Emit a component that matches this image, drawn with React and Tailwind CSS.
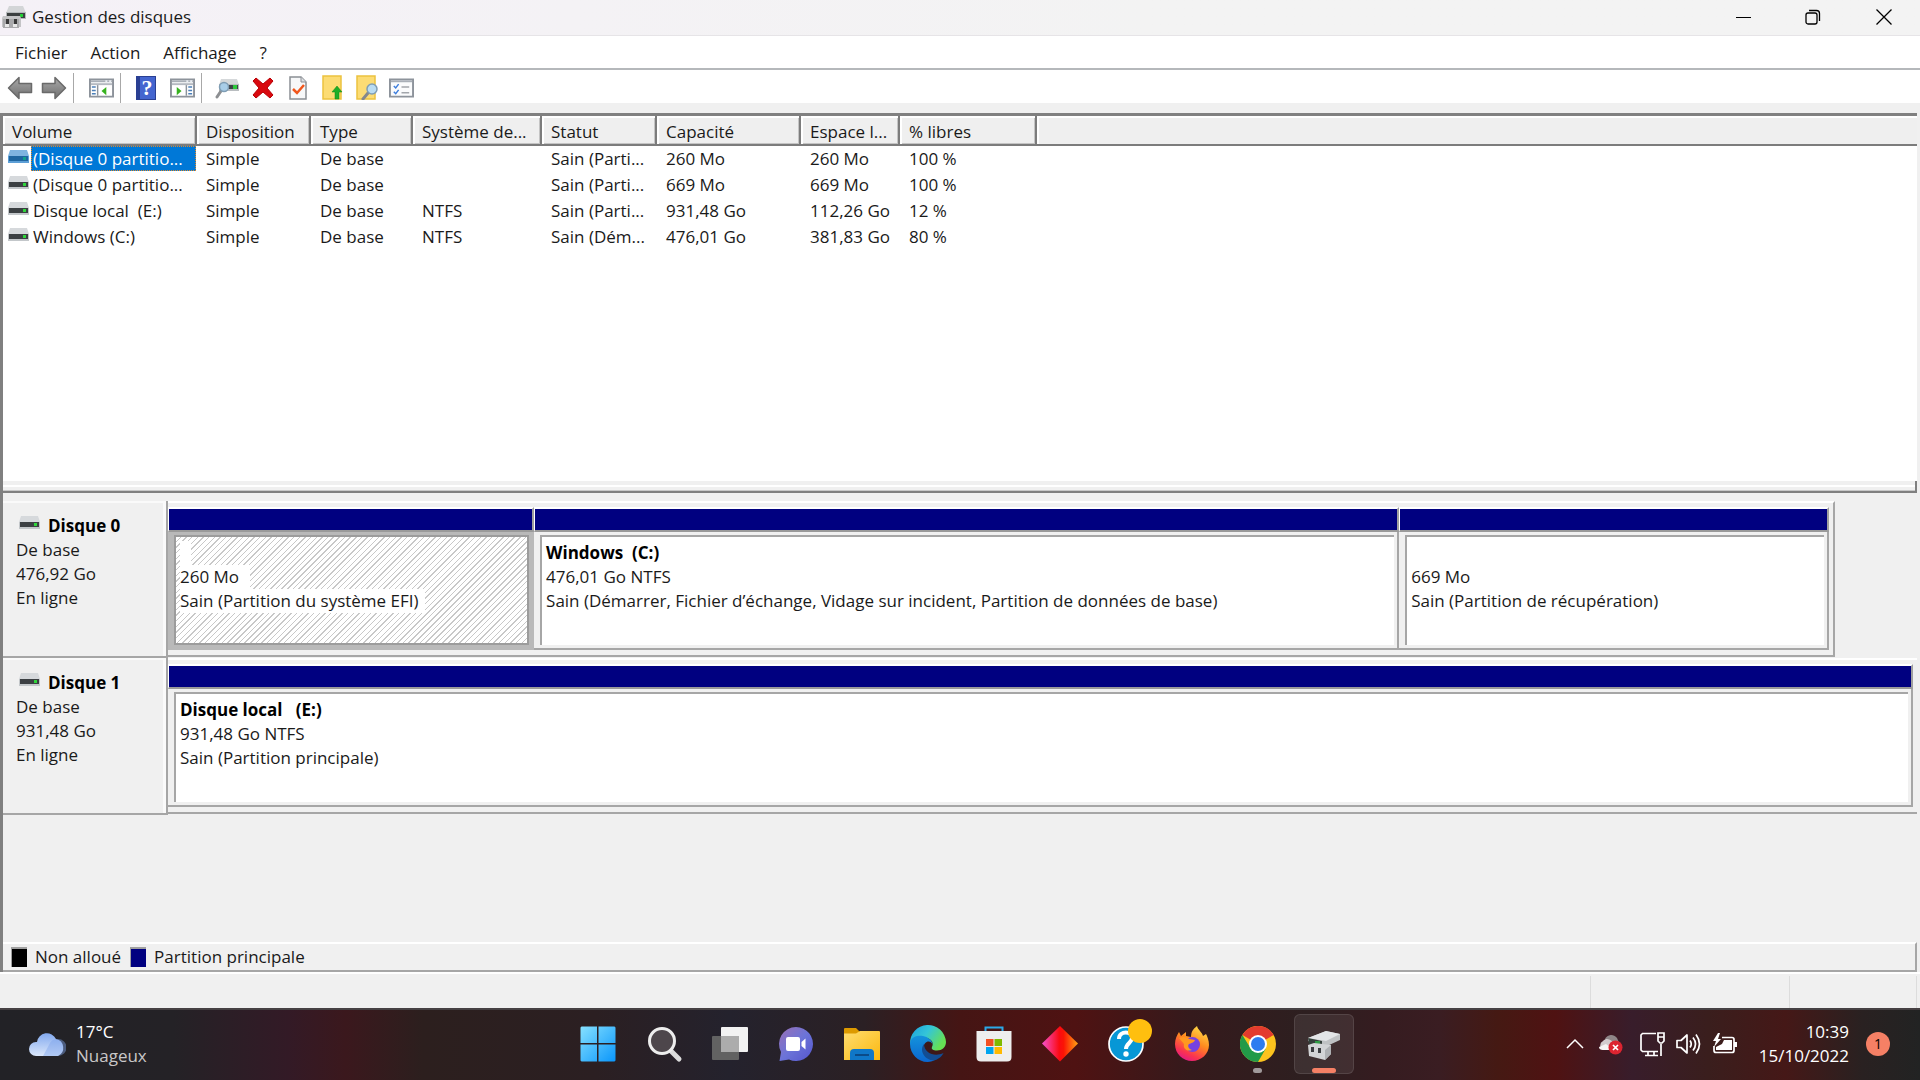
import { useState } from "react";

const volumes = [
  { name: "(Disque 0 partitio...", fs: "", status: "Sain (Parti...", size: "260 Mo", free: "260 Mo", pct: "100 %" },
  { name: "(Disque 0 partitio...", fs: "", status: "Sain (Parti...", size: "669 Mo", free: "669 Mo", pct: "100 %" },
  { name: "Disque local  (E:)", fs: "NTFS", status: "Sain (Parti...", size: "931,48 Go", free: "112,26 Go", pct: "12 %" },
  { name: "Windows (C:)", fs: "NTFS", status: "Sain (Dém...", size: "476,01 Go", free: "381,83 Go", pct: "80 %" },
];

const columns = [
  { label: "Volume", width: "w-[193px]" },
  { label: "Disposition", width: "w-[114px]" },
  { label: "Type", width: "w-[102px]" },
  { label: "Système de...", width: "w-[129px]" },
  { label: "Statut", width: "w-[115px]" },
  { label: "Capacité", width: "w-[144px]" },
  { label: "Espace l...", width: "w-[99px]" },
  { label: "% libres", width: "w-[137px]" },
];

const disks = [
  {
    name: "Disque 0",
    size: "476,92 Go",
    fill: "grow-[1667] border-r-2",
    rest: "grow-[82]",
    partitions: [
      { title: "", size: "260 Mo", status: "Sain (Partition du système EFI)", grow: "grow-[366]", selected: true },
      {
        title: "Windows  (C:)",
        size: "476,01 Go NTFS",
        status: "Sain (Démarrer, Fichier d’échange, Vidage sur incident, Partition de données de base)",
        grow: "grow-[865]",
      },
      { title: "", size: "669 Mo", status: "Sain (Partition de récupération)", grow: "grow-[430]" },
    ],
  },
  {
    name: "Disque 1",
    size: "931,48 Go",
    fill: "grow",
    rest: "",
    partitions: [
      { title: "Disque local   (E:)", size: "931,48 Go NTFS", status: "Sain (Partition principale)", grow: "grow" },
    ],
  },
];

function DriveIcon({ selected }) {
  return (
    <svg width="21" height="13" viewBox="0 0 21 13" className="shrink-0" aria-hidden="true">
      <path d="M2 0h17l2 6H0z" fill={selected ? "#7fb4e0" : "#d6d9dc"} />
      <path d="M0 6h21v7H0z" fill={selected ? "#5d9fd6" : "#c3c7ca"} />
      <path d="M1 6h19v5H1z" fill={selected ? "#1f66a0" : "#3c4043"} />
      <path d="M15 7h3v3h-3z" fill={selected ? "#12a08a" : "#2fd63a"} />
    </svg>
  );
}

function AppIcon() {
  return (
    <svg width="24" height="24" viewBox="0 0 24 24" aria-hidden="true">
      <path d="M7 1h14l3 7H4z" fill="#d3d5d7" />
      <path d="M4 7h20v7H4z" fill="#b5b8ba" />
      <path d="M5 8h18v5H5z" fill="#3b3f40" />
      <path d="M18 9h3v3h-3z" fill="#22cf35" />
      <path d="M0 13l1-2h17l1 2v9H0z" fill="#c4c4c6" />
      <path d="M1 14h16v9H1z" fill="#a9a9ab" />
      <path d="M4 14h3v5H4zM12 14h3v5h-3z" fill="#3a3a3a" />
      <path d="M3 19h4v3H3zM11 19h4v3h-4z" fill="#e8e8e8" />
    </svg>
  );
}

function ArrowIcon({ flip }) {
  const id = flip ? "arrow-right" : "arrow-left";
  return (
    <svg width="26" height="24" viewBox="0 0 26 24" className={flip ? "rotate-180" : ""} aria-hidden="true">
      <defs>
        <linearGradient id={id} x1="0" y1="0" x2="0" y2="1">
          <stop offset="0" stopColor={flip ? "#6f6f6f" : "#a9a9a9"} />
          <stop offset="1" stopColor={flip ? "#a9a9a9" : "#6f6f6f"} />
        </linearGradient>
      </defs>
      <path d="M1.500 12 12 1.500V7.500H24.500V16.500H12V22.500Z" fill={`url(#${id})`} stroke="#6a6a6a" strokeWidth="1.500" strokeLinejoin="round" />
    </svg>
  );
}

function PaneIcon({ run }) {
  return (
    <svg width="25" height="20" viewBox="0 0 26 20" aria-hidden="true">
      <path d="M1 1h24v18H1z" fill="#fff" stroke="#8d939b" strokeWidth="2" />
      <path d="M2 2h22v2H2z" fill="#a9afb7" />
      <path d="M17 2h2v2h-2zM21 2h2v2h-2z" fill="#e9edf2" />
      <path d="M2 6h22" stroke="#b5bac1" strokeWidth="2" />
      {run ? (
        <>
          <path d="M17 7v11" stroke="#8d939b" strokeWidth="1.500" />
          <path d="M7 9l5 4-5 4.500z" fill="#37b21f" />
          <path d="M19 9h4M19 12.500h4M19 16h4" stroke="#4b7fb8" strokeWidth="1.500" />
        </>
      ) : (
        <>
          <path d="M9 7v11" stroke="#8d939b" strokeWidth="1.500" />
          <path d="M18 9l-5 4 5 4.500z" fill="#37b21f" />
          <path d="M3 9h4M3 12.500h4M3 16h4" stroke="#4b7fb8" strokeWidth="1.500" />
        </>
      )}
    </svg>
  );
}

function HelpIcon() {
  return (
    <span className="flex h-6 w-5 items-center justify-center border border-[#2a3f93] border-l-4 bg-[#4465cf] font-['Liberation_Serif',serif] text-[22px] font-bold leading-none text-white">
      ?
    </span>
  );
}

function DiskSearchIcon() {
  return (
    <svg width="26" height="22" viewBox="0 0 26 22" aria-hidden="true">
      <path d="M6 2h16l2 6H4z" fill="#d5d8da" />
      <path d="M4 7h20v7H4z" fill="#b9bdc0" />
      <path d="M9 8h14v4H9z" fill="#3d4347" />
      <path d="M18 8h4v4h-4z" fill="#2cc83a" />
      <path d="M6 14 2 20" stroke="#8d8f92" strokeWidth="3" strokeLinecap="round" />
      <circle cx="9" cy="10" r="4.500" fill="#a8cde8" stroke="#7f9db4" strokeWidth="1.500" />
    </svg>
  );
}

function DeleteIcon() {
  return (
    <svg width="22" height="22" viewBox="0 0 22 22" aria-hidden="true">
      <path d="M4 1 11 7 18 1 21 4 15 11 21 18 18 21 11 15 4 21 1 18 7 11 1 4Z" fill="#d9090f" stroke="#b80005" strokeWidth="1" />
    </svg>
  );
}

function CheckDocIcon() {
  return (
    <svg width="18" height="24" viewBox="0 0 18 24" aria-hidden="true">
      <path d="M1 1h11l5 5v17H1z" fill="#f7f8f9" stroke="#8b8f94" strokeWidth="1.500" />
      <path d="M12 1v5h5" fill="#dcdfe2" stroke="#8b8f94" />
      <path d="M4 13l4 4 7-8" fill="none" stroke="#f0561c" strokeWidth="2.500" />
    </svg>
  );
}

function FolderUpIcon() {
  return (
    <svg width="21" height="25" viewBox="0 0 21 25" aria-hidden="true">
      <path d="M1 1h18v23H1z" fill="#fcdc74" stroke="#ecc23f" strokeWidth="1.500" />
      <path d="M15 11l5 6h-3v7h-4v-7h-3z" fill="#1fae26" stroke="#128619" strokeWidth=".5" />
    </svg>
  );
}

function FolderSearchIcon() {
  return (
    <svg width="23" height="25" viewBox="0 0 23 25" aria-hidden="true">
      <path d="M1 1h18v23H1z" fill="#fcdc74" stroke="#ecc23f" strokeWidth="1.500" />
      <path d="M12 18 7 24" stroke="#85888c" strokeWidth="3" strokeLinecap="round" />
      <circle cx="16" cy="14" r="5" fill="#b9dcf2" stroke="#7f9db4" strokeWidth="1.500" />
    </svg>
  );
}

function ChecklistIcon() {
  return (
    <svg width="25" height="20" viewBox="0 0 26 20" aria-hidden="true">
      <path d="M1 1h24v18H1z" fill="#fafbfc" stroke="#8d939b" strokeWidth="2" />
      <path d="M2 2h22v2H2z" fill="#a9afb7" />
      <path d="M5 8l2 2 3-4M5 14l2 2 3-4" fill="none" stroke="#3b7ddd" strokeWidth="1.500" />
      <path d="M13 9h8M13 15h8" stroke="#a2a6ab" strokeWidth="1.500" />
    </svg>
  );
}

function Separator() {
  return <span className="h-[30px] w-px bg-[#a8a8a8]" />;
}

function ToolButton({ label, width, children }) {
  return (
    <button type="button" aria-label={label} className={`flex h-7 items-center justify-center ${width}`}>
      {children}
    </button>
  );
}

function TitleBar() {
  return (
    <header className="flex h-9 shrink-0 items-stretch border-b border-[#e6e4e7] bg-linear-to-r from-[#f5f1f7] to-[#f3f3f3] to-60% pb-[2px] pl-[2px]">
      <div className="flex items-center gap-[6px]">
        <AppIcon />
        <h1 className="text-[17px] leading-6">Gestion des disques</h1>
      </div>
      <div className="ml-auto flex pr-px">
        <button type="button" aria-label="Réduire" className="flex w-[69px] items-center justify-center">
          <svg width="16" height="16" viewBox="0 0 16 16"><path d="M0 8.500h15" stroke="#000" /></svg>
        </button>
        <button type="button" aria-label="Restaurer" className="flex w-[70px] items-center justify-center">
          <svg width="16" height="16" viewBox="0 0 16 16" fill="none" stroke="#000" strokeWidth="1.300">
            <rect x="1" y="4" width="11" height="11" rx="2" />
            <path d="M4 1.500h7.500a3 3 0 0 1 3 3V12" />
          </svg>
        </button>
        <button type="button" aria-label="Fermer" className="flex w-[71px] items-center justify-center">
          <svg width="16" height="16" viewBox="0 0 16 16"><path d="M.5.500l15 15M15.500.500l-15 15" stroke="#000" strokeWidth="1.300" /></svg>
        </button>
      </div>
    </header>
  );
}

function Toolbar() {
  return (
    <div className="flex h-[33px] shrink-0 items-center bg-white pt-[2px] pl-[5px]">
      <ToolButton label="Précédent" width="w-[29px]"><ArrowIcon /></ToolButton>
      <ToolButton label="Suivant" width="w-[39px]"><ArrowIcon flip /></ToolButton>
      <Separator />
      <ToolButton label="Arborescence" width="ml-2 w-[38px]"><PaneIcon /></ToolButton>
      <Separator />
      <ToolButton label="Aide" width="w-[49px]"><HelpIcon /></ToolButton>
      <ToolButton label="Volet Actions" width="mr-[6px] w-[25px]"><PaneIcon run /></ToolButton>
      <Separator />
      <ToolButton label="Analyser" width="ml-2 w-[35px]"><DiskSearchIcon /></ToolButton>
      <ToolButton label="Supprimer" width="w-[35px]"><DeleteIcon /></ToolButton>
      <ToolButton label="Propriétés" width="w-[35px]"><CheckDocIcon /></ToolButton>
      <ToolButton label="Ouvrir" width="w-[35px]"><FolderUpIcon /></ToolButton>
      <ToolButton label="Explorer" width="w-[35px]"><FolderSearchIcon /></ToolButton>
      <ToolButton label="Paramètres" width="w-[32px]"><ChecklistIcon /></ToolButton>
    </div>
  );
}

function VolumeList({ selected, onSelect }) {
  return (
    <section className="h-[368px] shrink-0 border-t-[3px] border-l-[3px] border-[#808080] bg-white">
      <table className="w-full table-fixed border-collapse text-left">
        <thead>
          <tr className="h-[29px] bg-[#efefef]">
            {columns.map((c) => (
              <th
                key={c.label}
                className={`${c.width} truncate border-r-2 border-b-2 border-r-[#7c7c7c] border-b-[#7c7c7c] pt-1 pl-[9px] font-normal leading-6 shadow-[inset_2px_2px_0_#ffffff,inset_-1px_-1px_0_#c4c4c4]`}
              >
                {c.label}
              </th>
            ))}
            <th aria-label="Vide" className="border-b-2 border-b-[#7c7c7c] shadow-[inset_2px_2px_0_#ffffff]" />
          </tr>
        </thead>
        <tbody>
          {volumes.map((v, i) => (
            <tr key={i} className="h-[26px] cursor-default leading-[25px]" onClick={() => onSelect(i)}>
              <td className="p-0">
                <div className="flex items-center pl-[5px]">
                  <div className="mb-1"><DriveIcon selected={i === selected} /></div>
                  <span
                    className={`ml-[2px] grow truncate border border-dotted pl-px leading-[23px] whitespace-pre ${
                      i === selected ? "border-[#e08a2c] bg-[#0078d7] text-white" : "border-transparent"
                    }`}
                  >
                    {v.name}
                  </span>
                </div>
              </td>
              <td className="truncate pl-[10px]">Simple</td>
              <td className="truncate pl-[10px]">De base</td>
              <td className="truncate pl-[10px]">{v.fs}</td>
              <td className="truncate pl-[10px]">{v.status}</td>
              <td className="truncate pl-[10px]">{v.size}</td>
              <td className="pl-[10px] whitespace-nowrap">{v.free}</td>
              <td className="truncate pl-[10px]">{v.pct}</td>
              <td />
            </tr>
          ))}
        </tbody>
      </table>
    </section>
  );
}

function Partition({ part }) {
  const lineBg = part.selected ? "bg-white" : "";
  return (
    <div className={`flex basis-0 flex-col overflow-hidden ${part.grow}`}>
      <div className="h-[25px] border-2 border-l border-t-white border-r-[#a0a0a0] border-b-[#9a9a9a] border-l-white bg-[#000080]" />
      <div
        className={`grow border-r-2 border-b-2 py-[3px] pr-[3px] pl-[6px] ${
          part.selected ? "border-[#b9b9b9] bg-[#b9b9b9]" : "border-[#a6a6a6] bg-[#f0f0f0]"
        }`}
      >
        <div
          className={`flex h-full flex-col items-start pt-1 pl-1 ${
            part.selected
              ? "border-2 border-[#9c9c9c] bg-[repeating-linear-gradient(135deg,#ffffff_0px,#ffffff_3px,#c8c8c8_3px,#c8c8c8_4px)]"
              : "border-t-2 border-l-2 border-[#a6a6a6] bg-white"
          }`}
        >
          <p className={`h-6 pr-[11px] font-bold text-black whitespace-pre ${lineBg}`}>{part.title}</p>
          <p className={`pr-[11px] ${lineBg}`}>{part.size}</p>
          <p className={`pr-[6px] whitespace-nowrap ${lineBg}`}>{part.status}</p>
        </div>
      </div>
    </div>
  );
}

function DiskRow({ disk }) {
  return (
    <div className="flex h-[157px] leading-6">
      <div className="w-[165px] shrink-0 border-r-2 border-b-2 border-[#a6a6a6] pt-[13px] pl-[13px] shadow-[inset_0_2px_0_#fafafa,inset_-3px_0_0_#fafafa]">
        <div className="flex items-center gap-2 pl-[3px]">
          <div className="mb-2"><DriveIcon /></div>
          <h2 className="font-bold text-black">{disk.name}</h2>
        </div>
        <p>De base</p>
        <p>{disk.size}</p>
        <p>En ligne</p>
      </div>
      <div className={`mb-px flex basis-0 border-t-2 border-b-2 border-t-white border-r-[#a6a6a6] border-b-[#a6a6a6] pt-1 pr-1 pb-[5px] ${disk.fill}`}>
        {disk.partitions.map((p) => (
          <Partition key={p.status} part={p} />
        ))}
      </div>
      {disk.rest && <div className={`basis-0 ${disk.rest}`} />}
    </div>
  );
}

function TaskIcon({ label, active, children }) {
  return (
    <button type="button" aria-label={label} className="relative flex h-[68px] w-[66px] items-center justify-center">
      {active && <span className="absolute inset-x-[3px] top-1 bottom-1 rounded-md border border-white/10 bg-white/8" />}
      <svg width="36" height="36" viewBox="0 0 36 36" className="relative overflow-visible" aria-hidden="true">{children}</svg>
      {active && <span className="absolute bottom-[5px] h-[5px] w-6 rounded-full bg-[#f58065]" />}
    </button>
  );
}

function Taskbar() {
  return (
    <footer className="grid h-[72px] shrink-0 grid-cols-[1fr_auto_1fr] items-center border-t-2 border-[#464143] bg-[linear-gradient(90deg,#222226_0%,#242226_9%,#331a26_15%,#3b181d_18%,#2c1f1e_22%,#2b1f22_31%,#24222d_38%,#2b2024_45%,#451514_50%,#4f1212_56%,#351a1c_62%,#2d1f20_68%,#351c20_72%,#3a1d22_75%,#451913_78%,#4f1212_81%,#381d2b_85%,#3a1e1d_89%,#451817_93%,#292121_97%,#222323_100%)] pb-[2px] text-white">
      <div className="flex items-center pl-[29px]">
        <svg width="37" height="26" viewBox="0 0 37 26" aria-hidden="true">
          <defs>
            <linearGradient id="cloud" x1="0" y1="0" x2="0" y2="1">
              <stop offset="0" stopColor="#82a9ee" />
              <stop offset="1" stopColor="#dbe7fb" />
            </linearGradient>
          </defs>
          <path d="M7 25a7 7 0 0 1 0-14h1a10 10 0 0 1 19-3 9 9 0 0 1 2 17z" fill="url(#cloud)" />
          <path d="M20 14a9 9 0 0 1 9-6 8.500 8.500 0 0 1 0 17H14z" fill="#7fa5ea" opacity=".45" />
        </svg>
        <div className="ml-[10px] text-[17px] leading-6">
          <p>17°C</p>
          <p className="text-[#c9c7c8]">Nuageux</p>
        </div>
      </div>

      <nav className="flex pl-px">
        <TaskIcon label="Démarrer">
          <defs>
            <linearGradient id="win" x1="0" y1="0" x2="1" y2="1" gradientUnits="objectBoundingBox">
              <stop offset="0" stopColor="#86e1ff" />
              <stop offset="1" stopColor="#0a96fb" />
            </linearGradient>
          </defs>
          <path d="M1.500.500H17V17H.500V1.500zM18.500.500H34.500L35.500 1.500V17H18.500zM.5 18.500H17V35.500H1.500L.5 34.500zM18.500 18.500H35.500V34.500L34.500 35.500H18.500z" fill="url(#win)" />
        </TaskIcon>
        <TaskIcon label="Rechercher">
          <path d="M25 25l8 8" stroke="#dcdcdc" strokeWidth="5" strokeLinecap="round" />
          <circle cx="16" cy="15" r="12.500" fill="#4d464b" stroke="#ededed" strokeWidth="3" />
        </TaskIcon>
        <TaskIcon label="Vue des tâches">
          <rect x="9" y="1" width="27" height="25" rx="1" fill="#f2f2f2" />
          <rect x="0" y="10" width="27" height="24" rx="1" fill="#626262" />
          <path d="M9 10h18v16H9z" fill="#acacac" />
        </TaskIcon>
        <TaskIcon label="Conversation">
          <defs>
            <linearGradient id="chat" x1="0" y1="0" x2="1" y2="1">
              <stop offset="0" stopColor="#9a6fb4" />
              <stop offset=".5" stopColor="#6c74d8" />
              <stop offset="1" stopColor="#5455cd" />
            </linearGradient>
          </defs>
          <path d="M18 1a17 17 0 1 1-7 32.500L1.500 35 3 26A17 17 0 0 1 18 1z" fill="url(#chat)" />
          <rect x="8" y="11" width="14" height="14" rx="2" fill="#fff" />
          <path d="M23.500 16l4-3.500v11l-4-3.500z" fill="#fff" />
        </TaskIcon>
        <TaskIcon label="Explorateur de fichiers">
          <defs>
            <linearGradient id="folder" x1="0" y1="0" x2="1" y2="1">
              <stop offset="0" stopColor="#ffdd70" />
              <stop offset="1" stopColor="#fbb80f" />
            </linearGradient>
          </defs>
          <path d="M0 3q0-1 1-1h11l4 4v6H0z" fill="#dd9a00" />
          <path d="M0 7.500h12L16 5h19q1 0 1 1v28H0z" fill="url(#folder)" />
          <path d="M6 34v-7q0-4 4-4h16q4 0 4 4v7z" fill="#0f77c8" />
          <path d="M11 29h14" stroke="#0b4b88" strokeWidth="2" />
        </TaskIcon>
        <TaskIcon label="Edge">
          <defs>
            <linearGradient id="edge-top" x1="0" y1="0" x2="1" y2=".5">
              <stop offset="0" stopColor="#1a9fe0" />
              <stop offset=".5" stopColor="#34c5d8" />
              <stop offset="1" stopColor="#66e053" />
            </linearGradient>
            <linearGradient id="edge-low" x1="0" y1="0" x2="0" y2="1">
              <stop offset="0" stopColor="#1493dc" />
              <stop offset="1" stopColor="#0b66cf" />
            </linearGradient>
          </defs>
          <path d="M0 18A18 18 0 0 1 36 16c0 5-4 8.500-9 8.500-4 0-6-1.500-5-3.500 4-7-8-15-22-3z" fill="url(#edge-top)" />
          <path d="M0 17c1-7 9-8 13-7 5 1 9 4 9.500 8-3-5-9-2-9 4 0 7 8 12 13 11-3 2-6 3-9 3C8 36 0 28 0 18z" fill="url(#edge-low)" />
          <path d="M14 18c-5 6 0 16 10 16.500 4-1 8-4 9.500-7.500-8 4-19 1-19.500-9z" fill="#134d93" />
        </TaskIcon>
        <TaskIcon label="Microsoft Store">
          <path d="M9.500 7V1.500h17V7" fill="none" stroke="#2ba9e8" strokeWidth="2" />
          <path d="M.5 5h35v26q0 4.500-4.500 4.500H5Q.5 35.500.5 31z" fill="#eeeeee" />
          <path d="M10 13h7.500v7H10z" fill="#f25022" />
          <path d="M18.500 13H26v7h-7.500z" fill="#7fba00" />
          <path d="M10 21h7.500v7H10z" fill="#00a4ef" />
          <path d="M18.500 21H26v7h-7.500z" fill="#ffb900" />
        </TaskIcon>
        <TaskIcon label="Office">
          <defs>
            <linearGradient id="diamond">
              <stop offset="0" stopColor="#f552cf" />
              <stop offset=".48" stopColor="#fb0a12" />
              <stop offset=".6" stopColor="#fb1405" />
              <stop offset="1" stopColor="#ffa414" />
            </linearGradient>
          </defs>
          <path d="M18 0 36 17.500 18 35.500 0 17.500z" fill="url(#diamond)" />
        </TaskIcon>
        <TaskIcon label="Obtenir de l’aide">
          <circle cx="18" cy="18" r="17" fill="#0797d6" stroke="#fff" strokeWidth="1.700" />
          <path d="M11 13c0-9 14-8 13-1 0 5-6 5-6 11" fill="none" stroke="#fff" strokeWidth="4" />
          <circle cx="18" cy="28" r="2.700" fill="#fff" />
          <circle cx="32" cy="5" r="12" fill="#ffbf0f" />
        </TaskIcon>
        <TaskIcon label="Firefox">
          <defs>
            <linearGradient id="fox" x1=".8" y1="0" x2=".3" y2="1">
              <stop offset="0" stopColor="#ffe14a" />
              <stop offset=".45" stopColor="#ff8a1f" />
              <stop offset=".8" stopColor="#fa3350" />
              <stop offset="1" stopColor="#e01a87" />
            </linearGradient>
          </defs>
          <path d="M5 6l2 4 5-4v4l5 1c0-5 2-8 6-11 1 4 5 6 6 10l3-2c1 2 3 6 3 11 0 9-8 16-17 16S1 28 1 18c0-5 2-9 4-12z" fill="url(#fox)" />
          <circle cx="18.500" cy="18.500" r="7.500" fill="#7542e0" />
          <path d="M5 12c4-2 8-1 10 1l6 1c-1 3-4 3-6 4-2 2 0 5 3 6-6 2-9-2-8-6z" fill="#ff9820" />
        </TaskIcon>
        <button type="button" aria-label="Chrome" className="relative flex h-[68px] w-[66px] items-center justify-center">
          <svg width="36" height="36" viewBox="0 0 36 36" aria-hidden="true">
            <circle cx="18" cy="18" r="18" fill="#fcc31e" />
            <path d="M18 18 2.400 9A18 18 0 0 1 33.600 9z" fill="#e33b2e" />
            <path d="M2.400 9 11 23 18 27 18 36A18 18 0 0 1 2.400 9z" fill="#229a48" />
            <path d="M18 36 25.500 23 11 23z" fill="#229a48" />
            <circle cx="18" cy="18" r="9" fill="#fff" />
            <circle cx="18" cy="18" r="7" fill="#2e7cf0" />
          </svg>
          <span className="absolute bottom-[5px] h-[5px] w-[9px] rounded-full bg-[#a09a9b]" />
        </button>
        <TaskIcon label="Gestion des disques" active>
          <path d="M2 12 20 5l14 3v6l-13 6-19-5z" fill="#bfc2c4" />
          <path d="M2 12 20 5l14 3-14 7z" fill="#e3e5e7" />
          <path d="M2 12l14 3v6L3 18z" fill="#33403a" />
          <path d="M9 15h5v3H9z" fill="#2e9b45" />
          <path d="M2 19l6-2 17 2v9l-6 6-16-4z" fill="#d2d4d6" />
          <path d="M19 24l6-5v9l-6 6z" fill="#aeb1b4" />
          <path d="M5 21h3v5H5zM12 22h3v5h-3z" fill="#3a3d40" />
        </TaskIcon>
      </nav>

      <div className="flex items-center justify-end pr-[30px]">
        <button type="button" aria-label="Icônes masquées">
          <svg width="18" height="12" viewBox="0 0 18 12"><path d="M1 10l8-8 8 8" fill="none" stroke="#fff" strokeWidth="1.500" /></svg>
        </button>
        <svg width="25" height="22" viewBox="0 0 25 22" className="ml-[14px]" aria-hidden="true">
          <path d="M7 6a7 7 0 0 1 12-1l3 7H10z" fill="#8f8688" />
          <path d="M5 17a5 5 0 0 1 0-9c4-4 9-1 11 3l-2 6z" fill="#d2cbcd" />
          <path d="M1 14q0 3 4 3h7v-3L8 11z" fill="#f6f4f4" />
          <circle cx="17.500" cy="14.500" r="7" fill="#dc2430" />
          <path d="M15 12l5 5M20 12l-5 5" stroke="#fff" strokeWidth="1.700" />
        </svg>
        <svg width="25" height="25" viewBox="0 0 25 25" className="ml-[17px]" fill="none" stroke="#fff" strokeWidth="1.700" aria-hidden="true">
          <path d="M16 1.500H2.500L1 3v15l1.500 1.500H18M21 12v12M8 20v3.500M14 20v3.500M5 23.500h13" />
          <path d="M18 1h6v8l-2 2h-2l-2-2zM18 5h6" />
        </svg>
        <svg width="25" height="22" viewBox="0 0 25 22" className="ml-[11px]" fill="none" stroke="#fff" strokeWidth="1.700" strokeLinejoin="round" aria-hidden="true">
          <path d="M1 7.500h4L11 2v18l-6-5.500H1z" />
          <path d="M14 7.500q2.500 3.500 0 7M17 4.500q5 6.500 0 13M20 1.500q7 9.500 0 19" />
        </svg>
        <svg width="25" height="22" viewBox="0 0 25 22" className="ml-[11px]" aria-hidden="true">
          <path d="M10 4.500h10q2 0 2 2v11q0 2-2 2H4q-2 0-2-2V13" fill="none" stroke="#fff" strokeWidth="1.700" />
          <path d="M12 7h8v10H4v-3l6-3z" fill="#fff" />
          <path d="M22 9h3v5h-3z" fill="#fff" />
          <path d="M6 0 1 8h3l-2 6 7-8H6l2-6z" fill="#fff" />
        </svg>
        <div className="w-[112px] text-right text-[17px] leading-6">
          <p>10:39</p>
          <p>15/10/2022</p>
        </div>
        <span className="ml-[17px] flex size-6 items-center justify-center rounded-full bg-[#f58065] text-sm text-black">1</span>
      </div>
    </footer>
  );
}

export default function App() {
  const [selected, setSelected] = useState(0);

  return (
    <div className="flex h-screen flex-col overflow-hidden bg-[#f0f0f0] font-['Open_Sans','Noto_Sans',sans-serif] text-[17px] text-[#1a1a1a]">
      <TitleBar />
      <nav className="flex h-[34px] shrink-0 items-center gap-[23px] border-b-2 border-[#b5b8bb] bg-white pt-[2px] pl-[15px] leading-6">
        <button type="button">Fichier</button>
        <button type="button">Action</button>
        <button type="button">Affichage</button>
        <button type="button">?</button>
      </nav>
      <Toolbar />
      <div className="mt-[10px] mr-[3px] flex min-h-0 grow flex-col">
        <VolumeList selected={selected} onSelect={setSelected} />
        <div className="h-3 shrink-0 border-r-2 border-b-2 border-l-[3px] border-[#808080] bg-[#f0f0f0] pt-1">
          <div className="h-[6px] border-t-2 border-b border-t-white border-b-[#c8c8c8]" />
        </div>
        <section className="flex min-h-0 grow flex-col border-l-[3px] border-[#808080] pt-2">
          {disks.map((d) => (
            <DiskRow key={d.name} disk={d} />
          ))}
          <div className="mt-auto flex h-[30px] shrink-0 items-center border-t-2 border-r-2 border-b-2 border-t-white border-r-[#a6a6a6] border-b-[#a6a6a6] pl-2 leading-6">
            <span className="h-5 w-4 border-t-2 border-l border-[#a0a0a0] bg-black" />
            <span className="ml-2">Non alloué</span>
            <span className="ml-[9px] h-5 w-4 border-t-2 border-l border-[#a0a0a0] bg-[#000080]" />
            <span className="ml-2">Partition principale</span>
          </div>
        </section>
      </div>
      <div className="flex h-9 shrink-0 justify-end border-t-2 border-white pt-[2px]">
        <div className="w-[199px] border-l border-[#dcdcdc]" />
        <div className="w-[128px] border-x border-[#dcdcdc]" />
        <div className="w-[3px]" />
      </div>
      <Taskbar />
    </div>
  );
}
